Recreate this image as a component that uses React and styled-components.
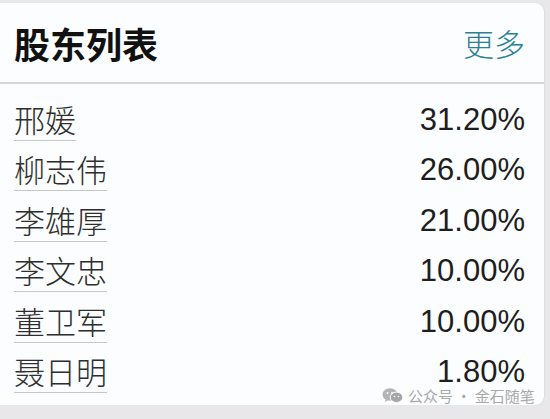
import React from "react";
import styled, { createGlobalStyle } from "styled-components";

const Global = createGlobalStyle`
  html, body { margin: 0; padding: 0; background: #e8e8ea; }
  body { width: 550px; height: 419px; overflow: hidden; }
  * { box-sizing: border-box; }
`;

const Page = styled.div`
  position: relative;
  width: 550px;
  height: 419px;
  padding-top: 3px;
  background: #e8e8ea;
`;

const Card = styled.div`
  width: 554px;
  height: 402px;
  margin-left: -10px;
  background: #fbfdfe;
  border-radius: 0 9px 9px 0;
  box-shadow: 1px 0 1px rgba(0, 0, 0, 0.05);
  padding-left: 10px;
  display: flex;
  flex-direction: column;
`;

const Header = styled.div`
  height: 81px;
  display: flex;
  align-items: center;
  justify-content: space-between;
  padding: 0 19px 0 14px;
  border-bottom: 2px solid #d6d6d8;
`;

const Title = styled.h1`
  margin: 0;
  font-family: "Noto Sans CJK SC", sans-serif;
  font-size: 36px;
  font-weight: 700;
  line-height: 1;
  color: #111;
`;

const More = styled.span`
  font-family: "Noto Sans CJK SC", sans-serif;
  font-size: 31px;
  font-weight: 300;
  line-height: 1;
  color: #2a8196;
`;

const List = styled.div`
  padding-top: 6px;
  display: flex;
  flex-direction: column;
`;

const Row = styled.div`
  height: 50.5px;
  display: flex;
  align-items: flex-end;
  justify-content: space-between;
  padding: 0 19px 0 14px;
`;

const Name = styled.span`
  font-family: "Noto Sans CJK SC", sans-serif;
  font-size: 31px;
  font-weight: 300;
  line-height: 1;
  color: #2e2e2e;
  padding-bottom: 6px;
  border-bottom: 1.5px solid #c6c6c8;
`;

const Pct = styled.span`
  font-family: "Liberation Sans", Arial, sans-serif;
  font-size: 31px;
  line-height: 26px;
  color: #1e1e1e;
  padding-bottom: 8px;
`;

const Watermark = styled.div`
  position: absolute;
  left: 382px;
  top: 388px;
  display: flex;
  align-items: center;
  gap: 5px;
  font-family: "Noto Sans CJK SC", sans-serif;
  font-size: 15px;
  line-height: 15px;
  color: #a9a9ab;
`;

const WeChat = () => (
  <svg width="21" height="15" viewBox="0 0 21 15">
    <ellipse cx="8" cy="6.5" rx="7.5" ry="6.2" fill="#b4b4b6" />
    <path d="M3.5 11.5 L2.8 14 L6 12.2 Z" fill="#b4b4b6" />
    <ellipse cx="14.5" cy="9.3" rx="6.3" ry="5.2" fill="#a6a6a8" stroke="#fbfdfe" strokeWidth="1" />
    <circle cx="5.5" cy="5" r="1" fill="#fbfdfe" />
    <circle cx="10" cy="5" r="1" fill="#fbfdfe" />
    <circle cx="12.5" cy="8.5" r="0.8" fill="#fbfdfe" />
    <circle cx="16.5" cy="8.5" r="0.8" fill="#fbfdfe" />
  </svg>
);

const holders = [
  ["邢媛", "31.20%"],
  ["柳志伟", "26.00%"],
  ["李雄厚", "21.00%"],
  ["李文忠", "10.00%"],
  ["董卫军", "10.00%"],
  ["聂日明", "1.80%"],
];

export default function App() {
  return (
    <>
      <Global />
      <Page>
        <Card>
          <Header>
            <Title>股东列表</Title>
            <More>更多</More>
          </Header>
          <List>
            {holders.map(([n, p]) => (
              <Row key={n}>
                <Name>{n}</Name>
                <Pct>{p}</Pct>
              </Row>
            ))}
          </List>
        </Card>
        <Watermark>
          <WeChat />
          <span>公众号 · 金石随笔</span>
        </Watermark>
      </Page>
    </>
  );
}
